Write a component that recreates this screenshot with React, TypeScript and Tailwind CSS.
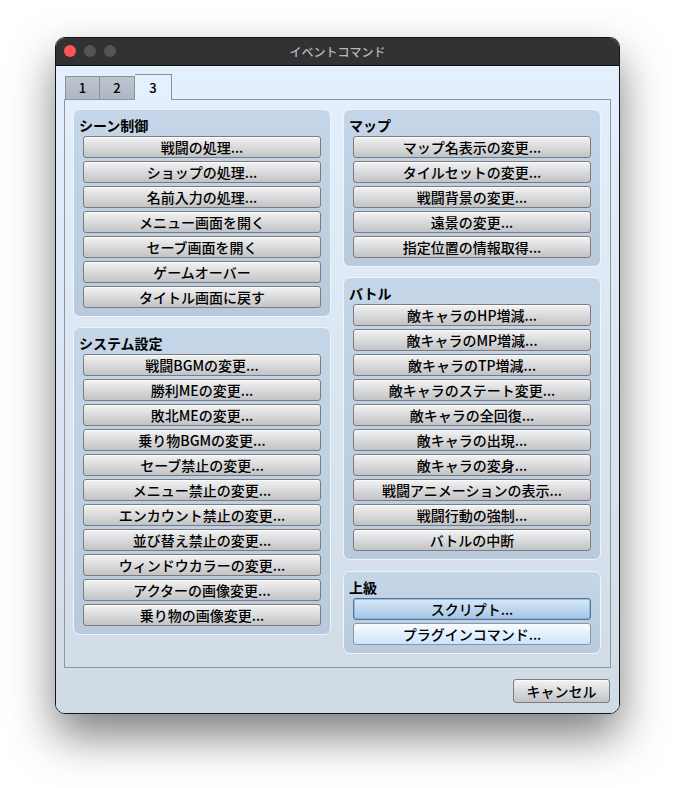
import React from "react";

const font = { fontFamily: '"Noto Sans CJK JP", "Noto Sans", sans-serif' };

type BtnKind = "normal" | "focus" | "hover";

function Btn({ label, kind = "normal" }: { label: string; kind?: BtnKind }) {
  let cls =
    "h-[22px] w-full rounded-[3px] border flex items-center justify-center text-[14px] font-medium leading-none text-black ";
  if (kind === "focus") {
    cls +=
      "border-[#52779e] bg-gradient-to-b from-[#d7e9fa] to-[#a6c4e2] shadow-[inset_0_0_0_1px_rgba(120,160,200,0.6)]";
  } else if (kind === "hover") {
    cls += "border-[#8895a3] bg-gradient-to-b from-[#f8fcff] to-[#cde4fa]";
  } else {
    cls +=
      "border-[#7a7c80] bg-gradient-to-b from-[#f3f3f3] to-[#c2c3c6] shadow-[inset_0_1px_0_rgba(255,255,255,0.8)]";
  }
  return <div className={cls}>{label}</div>;
}

function Group({
  title,
  items,
  special,
}: {
  title: string;
  items: string[];
  special?: Record<string, BtnKind>;
}) {
  return (
    <div className="rounded-[7px] border border-[#eef4fb] bg-gradient-to-b from-[#c5d6e8] to-[#b8cadc] pt-[4px] pb-[8px]">
      <div className="h-[22px] flex items-center pl-[5px] text-[14px] font-bold text-black leading-none">
        {title}
      </div>
      <div className="flex flex-col gap-[3px] px-[9px]">
        {items.map((it) => (
          <Btn key={it} label={it} kind={special?.[it] ?? "normal"} />
        ))}
      </div>
    </div>
  );
}

export default function App() {
  return (
    <div className="w-[676px] h-[788px] bg-white pt-[37px] pl-[55px]" style={font}>
      <div className="w-[565px] h-[677px] rounded-[10px] border border-[#151515] overflow-hidden flex flex-col shadow-[0_22px_45px_rgba(0,0,0,0.5)]">
        {/* title bar */}
        <div className="relative h-[28px] shrink-0 bg-[#323133] border-b border-[#0c0c0c] flex items-center justify-center">
          <div className="absolute left-[8px] top-[7px] flex gap-[8px]">
            <div className="w-[12px] h-[12px] rounded-full bg-[#fe5652]" />
            <div className="w-[12px] h-[12px] rounded-full bg-[#545456]" />
            <div className="w-[12px] h-[12px] rounded-full bg-[#545456]" />
          </div>
          <span className="text-[12px] text-[#b8b8b8] font-medium leading-none">イベントコマンド</span>
        </div>
        {/* body */}
        <div className="flex-1 bg-gradient-to-b from-[#e4f0fd] to-[#d0dbe6] px-[8px] pt-[8px] flex flex-col">
          {/* tabs */}
          <div className="h-[25px] flex items-end pl-[1px] relative z-10">
            <div className="w-[35px] h-[23px] border border-b-0 border-[#8a9299] bg-gradient-to-b from-[#bcc5ce] to-[#aeb8c2] flex items-center justify-center text-[13px] font-medium text-black">
              1
            </div>
            <div className="w-[35px] h-[23px] border border-b-0 border-l-0 border-[#8a9299] bg-gradient-to-b from-[#bcc5ce] to-[#aeb8c2] flex items-center justify-center text-[13px] font-medium text-black">
              2
            </div>
            <div className="w-[37px] h-[26px] -mb-[1px] border border-b-0 border-l-0 border-[#8a9299] bg-[#e4f0fd] flex items-center justify-center text-[13px] font-medium text-black">
              3
            </div>
          </div>
          {/* panel */}
          <div className="h-[569px] border border-[#8e959c] grid grid-cols-[258px_258px] gap-x-[12px] pl-[8px] pt-[9px] items-start">
            <div className="flex flex-col gap-[10px]">
              <Group
                title="シーン制御"
                items={[
                  "戦闘の処理...",
                  "ショップの処理...",
                  "名前入力の処理...",
                  "メニュー画面を開く",
                  "セーブ画面を開く",
                  "ゲームオーバー",
                  "タイトル画面に戻す",
                ]}
              />
              <Group
                title="システム設定"
                items={[
                  "戦闘BGMの変更...",
                  "勝利MEの変更...",
                  "敗北MEの変更...",
                  "乗り物BGMの変更...",
                  "セーブ禁止の変更...",
                  "メニュー禁止の変更...",
                  "エンカウント禁止の変更...",
                  "並び替え禁止の変更...",
                  "ウィンドウカラーの変更...",
                  "アクターの画像変更...",
                  "乗り物の画像変更...",
                ]}
              />
            </div>
            <div className="flex flex-col gap-[10px]">
              <Group
                title="マップ"
                items={[
                  "マップ名表示の変更...",
                  "タイルセットの変更...",
                  "戦闘背景の変更...",
                  "遠景の変更...",
                  "指定位置の情報取得...",
                ]}
              />
              <Group
                title="バトル"
                items={[
                  "敵キャラのHP増減...",
                  "敵キャラのMP増減...",
                  "敵キャラのTP増減...",
                  "敵キャラのステート変更...",
                  "敵キャラの全回復...",
                  "敵キャラの出現...",
                  "敵キャラの変身...",
                  "戦闘アニメーションの表示...",
                  "戦闘行動の強制...",
                  "バトルの中断",
                ]}
              />
              <div className="mt-[1px]">
                <Group
                  title="上級"
                  items={["スクリプト...", "プラグインコマンド..."]}
                  special={{ "スクリプト...": "focus", "プラグインコマンド...": "hover" }}
                />
              </div>
            </div>
          </div>
          {/* footer */}
          <div className="flex justify-end pt-[11px] pr-[1px]">
            <div className="w-[97px] h-[24px] rounded-[3px] border border-[#7a7c80] bg-gradient-to-b from-[#f3f3f3] to-[#c2c3c6] shadow-[inset_0_1px_0_rgba(255,255,255,0.8)] flex items-center justify-center text-[14px] font-medium text-black leading-none">
              キャンセル
            </div>
          </div>
        </div>
      </div>
    </div>
  );
}
